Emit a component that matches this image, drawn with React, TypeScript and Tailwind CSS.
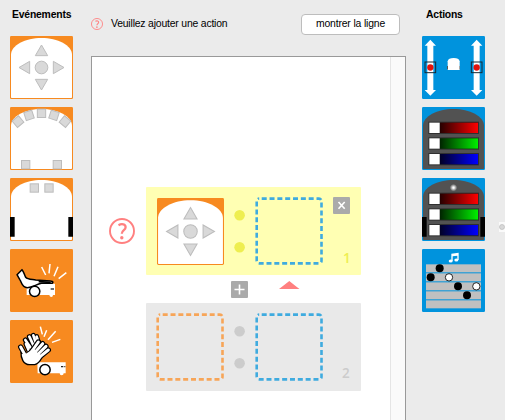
import React from "react";

const ORANGE = "#f78a20";
const BLUE = "#0093dd";

function Tile({ color, size = "w-[63px] h-[63px]", children }: { color: string; size?: string; children: React.ReactNode }) {
  return (
    <svg viewBox="0 0 189 189" className={`block shrink-0 ${size}`}>
      <rect width="189" height="189" rx="4" fill={color} />
      {children}
    </svg>
  );
}

const BODY = "M3 184V56C3 28 46 6 94.500 6S186 28 186 56V184Q186 186 184 186H5Q3 186 3 184Z";

function Buttons({ size }: { size?: string }) {
  return (
    <Tile color={ORANGE} size={size}>
      <path d={BODY} fill="#fff" />
      <g fill="#d9d9d9" stroke="#bdbdbd" strokeWidth="3">
        <path d="M94.500 27L113 59H76Z" />
        <path d="M94.500 162L113 130H76Z" />
        <path d="M27 94.500L59 76V113Z" />
        <path d="M162 94.500L130 76V113Z" />
        <circle cx="94.500" cy="94.500" r="19" />
      </g>
    </Tile>
  );
}

function Sensor({ x, y, r = 0 }: { x: number; y: number; r?: number }) {
  return (
    <rect x="-12.500" y="-12.500" width="25" height="25" fill="#d9d9d9" stroke="#bdbdbd" strokeWidth="3" transform={`translate(${x} ${y}) rotate(${r})`} />
  );
}

function Proximity() {
  return (
    <Tile color={ORANGE}>
      <path d={BODY} fill="#fff" />
      <Sensor x={24} y={44} r={-40} />
      <Sensor x={57} y={25} r={-18} />
      <Sensor x={94.5} y={19} />
      <Sensor x={132} y={25} r={18} />
      <Sensor x={165} y={44} r={40} />
      <Sensor x={47} y={173} />
      <Sensor x={142} y={173} />
    </Tile>
  );
}

function Ground() {
  return (
    <Tile color={ORANGE}>
      <path d={BODY} fill="#fff" />
      <Sensor x={73} y={30} />
      <Sensor x={117} y={30} />
      <path d="M0 117H14V176H0ZM175 117H189V176H175Z" fill="#000" />
    </Tile>
  );
}

function Tap() {
  return (
    <Tile color={ORANGE}>
      <path d="M50 104H135V138H129Q129 144 124 144T118 138H50Z" fill="#fff" />
      <path d="M122 118H132V122H122Z" fill="#222" />
      <path d="M21 77L36 62C42 69 43 78 47 85C53 92 66 91 77 93L122 96C130 96 131 102 124 103L94 103C78 107 67 115 52 116C35 116 36 101 29 91Z" fill="#fff" stroke="#000" strokeWidth="4.500" strokeLinejoin="round" strokeLinecap="round" />
      <path d="M86 98L122 100" stroke="#000" strokeWidth="5" />
      <circle cx="74" cy="127" r="15.500" fill="#fff" stroke="#000" strokeWidth="4.500" />
      <path d="M95 54L107 78M120 45L117 73M144 53L132 82M169 71L146 89" stroke="#fff" strokeWidth="4.500" />
    </Tile>
  );
}

const BACK_FINGERS = "M67 91L46 60M75 86L58 50M82 82L70 46M91 86L80 50M58 95L48 72";
const FRONT_FINGERS = "M60 102L85 66M67 106L98 71M75 111L108 79M80 118L115 90M48 110L32 81";

function Clap() {
  return (
    <Tile color={ORANGE}>
      <path d="M82 127H167V160H161Q161 166 155 166T149 160H83Z" fill="#fff" />
      <path d="M153 138H160V142H153ZM163 138H166V142H163Z" fill="#222" />
      <circle cx="105" cy="149" r="15.500" fill="#fff" stroke="#000" strokeWidth="4.500" />
      <g fill="none" strokeLinecap="round">
        <path d={BACK_FINGERS} stroke="#000" strokeWidth="15" />
        <path d={BACK_FINGERS} stroke="#fff" strokeWidth="8" />
        <path d={FRONT_FINGERS} stroke="#000" strokeWidth="16" />
      </g>
      <path d="M33 96C32 114 40 134 59 134H74C88 131 92 120 99 107L66 84L48 104Z" fill="#fff" stroke="#000" strokeWidth="4" strokeLinejoin="round" />
      <path d={FRONT_FINGERS} stroke="#fff" strokeWidth="9" strokeLinecap="round" />
      <path d="M46 102L72 86L90 110L70 129L46 122Z" fill="#fff" />
      <path d="M91 20L97 43M110 31L102 50M137 34L114 59M151 58L126 67" stroke="#fff" strokeWidth="4.500" />
    </Tile>
  );
}

function Motors() {
  return (
    <Tile color={BLUE}>
      {[25, 164].map((x) => (
        <g key={x} transform={`translate(${x} 0)`}>
          <path d="M0 11L17 29H9V162H17L0 179L-17 162H-9V29H-17Z" fill="#fff" />
          <rect x="-16" y="78" width="32" height="32" fill="none" stroke="#142a36" strokeWidth="3" />
          <circle cy="94.500" r="9.500" fill="#e3120b" />
        </g>
      ))}
      <path d="M75 90H114V100H75Z" fill="#000" />
      <path d="M77 102V76Q79 66 95 66T113 76V102Z" fill="#fff" />
    </Tile>
  );
}

function Leds({ id, bottom = false }: { id: string; bottom?: boolean }) {
  return (
    <Tile color={BLUE}>
      <defs>
        {["#ff0000", "#00f000", "#0000ff"].map((c, i) => (
          <linearGradient key={c} id={`${id}${i}`}>
            <stop offset="0" stopColor={c} stopOpacity="0.15" />
            <stop offset="1" stopColor={c} />
          </linearGradient>
        ))}
        <radialGradient id={`${id}g`}>
          <stop offset="0.150" stopColor="#fff" />
          <stop offset="1" stopColor="#555" />
        </radialGradient>
      </defs>
      <path d={BODY} fill="#525252" />
      {bottom && <circle cx="94.500" cy="29" r="11" fill={`url(#${id}g)`} />}
      {[0, 1, 2].map((i) => (
        <g key={i} transform={`translate(0 ${44 + i * 47})`}>
          <rect x="19" width="152" height="37" fill="#303030" />
          <rect x="22" y="3" width="31" height="31" fill="#fff" />
          <rect x="54" y="3" width="114" height="31" fill="#000" />
          <rect x="54" y="3" width="114" height="31" fill={`url(#${id}${i})`} />
        </g>
      ))}
      {bottom && <path d="M0 117H14V176H0ZM175 117H189V176H175Z" fill="#000" />}
    </Tile>
  );
}

function Music() {
  return (
    <Tile color={BLUE}>
      {[46, 73, 100, 127, 154].map((y) => (
        <rect key={y} x="12" y={y} width="165" height="24" fill="#c0c0c0" />
      ))}
      <g fill="#fff">
        <ellipse cx="86" cy="36" rx="6" ry="4.500" />
        <ellipse cx="103" cy="33" rx="6" ry="4.500" />
        <path d="M88 14L110 11V33H106V20L92 22V36H88Z" />
      </g>
      {[[53, 58], [26, 85], [108, 112], [135, 139]].map(([x, y]) => (
        <circle key={x} cx={x} cy={y} r="12" fill="#000" />
      ))}
      {[[81, 85], [163, 112]].map(([x, y]) => (
        <circle key={x} cx={x} cy={y} r="11" fill="#fff" stroke="#000" strokeWidth="2.500" />
      ))}
    </Tile>
  );
}

function Slot({ color }: { color: string }) {
  return (
    <svg viewBox="0 0 68 68" className="block h-[68px] w-[68px] shrink-0">
      <rect x="1.700" y="1.600" width="64.800" height="64.800" rx="2.500" fill="none" stroke={color} strokeWidth="2.600" strokeDasharray="5 2.830" strokeDashoffset="-2.500" />
    </svg>
  );
}

function Dots({ color }: { color: string }) {
  return (
    <div className="mx-[10px] flex h-[68px] w-[11px] flex-col items-center gap-[21px] pt-[13px]">
      {[0, 1].map((i) => (
        <svg key={i} viewBox="0 0 11 11" className="block h-[11px] w-[11px] shrink-0">
          <circle cx="5.600" cy="5.300" r="5.300" fill={color} />
        </svg>
      ))}
    </div>
  );
}

function Help({ className }: { className: string }) {
  return (
    <svg viewBox="0 0 26 26" className={className} fill="none" stroke="#ff8080">
      <circle cx="13" cy="13" r="12" strokeWidth="1.900" />
      <path d="M9.500 7.200C13 5.300 16.600 6.300 16.600 9.200C16.600 12.300 12.800 12 12.800 15.800" strokeWidth="2.300" />
      <circle cx="12.800" cy="19.800" r="1.700" fill="#ff8080" stroke="none" />
    </svg>
  );
}

function SquareButton({ path }: { path: string }) {
  return (
    <svg viewBox="0 0 17 17" className="block h-[17px] w-[17px] shrink-0">
      <rect width="17" height="17" rx="1" fill="#aaa" />
      <path d={path} stroke="#fff" strokeWidth="1.600" fill="none" />
    </svg>
  );
}

export default function App() {
  return (
    <div className="flex h-[420px] w-[505px] overflow-hidden bg-[#ebebeb] font-['Liberation_Sans',Arial,sans-serif] text-black">
      <aside className="flex w-[91px] shrink-0 flex-col pl-[10px]">
        <h2 className="h-[36px] whitespace-nowrap pl-[2px] pt-[8px] text-[10.400px] font-bold leading-[13px] tracking-[-0.200px]">Evénements</h2>
        <div className="flex flex-col gap-2">
          <Buttons />
          <Proximity />
          <Ground />
          <Tap />
          <Clap />
        </div>
      </aside>

      <main className="flex w-[315px] shrink-0 flex-col">
        <header className="flex h-[56px] shrink-0 items-start">
          <Help className="mt-[18px] block h-[12px] w-[12px] shrink-0" />
          <p className="ml-[8px] mt-[17px] w-[190px] whitespace-nowrap text-[10.400px] leading-[13px] tracking-[-0.180px]">Veuillez ajouter une action</p>
          <button className="mt-[14px] h-[21px] w-[99px] shrink-0 whitespace-nowrap rounded-[4px] border border-[#bdbdbd] bg-white pb-[2px] text-[10.400px] leading-[13px] tracking-[-0.150px]">montrer la ligne</button>
        </header>
        <section className="flex min-h-0 flex-1 border-x border-t border-[#999]">
          <div className="flex flex-1 flex-col bg-white pt-[130px]">
            <div className="flex h-[88px] shrink-0 items-center">
              <Help className="ml-[17px] mr-[11px] block h-[26px] w-[26px] shrink-0" />
              <div className="flex h-[88px] w-[215px] shrink-0 items-start rounded-[1px] bg-[#ffffb3] pl-[10px] pt-[10px]">
                <div className="flex h-[68px] w-[68px] shrink-0 items-center justify-center">
                  <Buttons size="w-[67px] h-[67px]" />
                </div>
                <Dots color="#eeee50" />
                <div className="pr-[10px]">
                  <Slot color="#3fabdf" />
                </div>
                <div className="flex flex-col items-center">
                  <SquareButton path="M5.500 5L11.700 11.800M11.700 5L5.500 11.800" />
                  <span className="ml-[10px] mt-[36px] font-['Open_Sans',sans-serif] text-[13.500px] font-semibold leading-[16px] text-[#eeee50]">1</span>
                </div>
              </div>
            </div>
            <div className="flex h-[28px] shrink-0 items-start pl-[139px] pt-[5.500px]">
              <SquareButton path="M8.500 3.500V13.500M3.500 8.500H13.500" />
              <svg viewBox="0 0 21 8" className="ml-[31px] block h-[8px] w-[21px]">
                <path d="M0 8Q4 5 10.300 0Q16.500 5 20.500 8Z" fill="#ff8080" />
              </svg>
            </div>
            <div className="ml-[54px] flex h-[88px] w-[215px] shrink-0 items-start rounded-[1px] bg-[#e9e9e9] pl-[10px] pt-[10px]">
              <Slot color="#f7a558" />
              <Dots color="#ccc" />
              <Slot color="#3fabdf" />
              <span className="ml-[19px] mt-[52px] font-['Open_Sans',sans-serif] text-[13.500px] font-semibold leading-[16px] text-[#ccc]">2</span>
            </div>
          </div>
          <div className="w-[15px] shrink-0 border-l border-[#e5e5e5] bg-[#fafafa]" />
        </section>
      </main>

      <aside className="flex w-[93px] shrink-0 flex-col pl-[16px]">
        <h2 className="h-[36px] whitespace-nowrap pl-[4px] pt-[8px] text-[10.400px] font-bold leading-[13px] tracking-[-0.200px]">Actions</h2>
        <div className="flex flex-col gap-2">
          <Motors />
          <Leds id="top" />
          <Leds id="bottom" bottom />
          <Music />
        </div>
      </aside>
      <svg viewBox="0 0 6 10" className="mt-[222px] block h-[10px] w-[6px] shrink-0">
        <rect width="6" height="10" fill="#fafafa" />
        <circle cx="3" cy="5" r="2.500" fill="#d8d8d8" stroke="#bbb" strokeWidth="0.700" />
      </svg>
    </div>
  );
}
